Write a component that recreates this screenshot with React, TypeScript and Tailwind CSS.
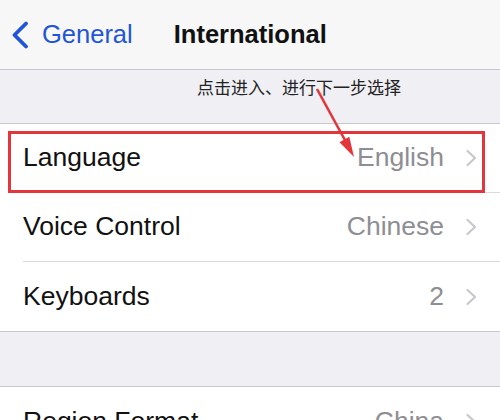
import React from 'react'

const rows = [
  { label: 'Language', value: 'English' },
  { label: 'Voice Control', value: 'Chinese' },
  { label: 'Keyboards', value: '2' },
]

function Chevron() {
  return (
    <svg width="12" height="18" viewBox="0 0 12 18" className="shrink-0">
      <path d="M2.5 2 L10 9 L2.5 16" fill="none" stroke="#c7c7cc" strokeWidth="2.2" strokeLinecap="round" strokeLinejoin="round" />
    </svg>
  )
}

function Row({ label, value, last }: { label: string; value: string; last?: boolean }) {
  return (
    <div className="pl-[23px] bg-white">
      <div className={`h-[69px] flex items-center pr-[23px] ${last ? '' : 'border-b border-[#d9d9de]'}`}>
        <span className="text-[26.5px] text-[#111111] flex-1">{label}</span>
        <span className="text-[26.5px] text-[#8e8e93] mr-[21px]">{value}</span>
        <Chevron />
      </div>
    </div>
  )
}

export default function App() {
  return (
    <div className="w-[500px] h-[420px] overflow-hidden relative bg-[#efeff4] font-['Liberation_Sans',Arial,sans-serif]">
      {/* Nav bar */}
      <div className="h-[70px] bg-[#f7f7f7] border-b border-[#c8c7cc] flex items-center">
        <div className="flex items-center pl-[11px] text-[#1f55d8]">
          <svg width="18" height="28" viewBox="0 0 18 28">
            <path d="M15 2.5 L3.5 14 L15 25.5" fill="none" stroke="#1f55d8" strokeWidth="3.8" strokeLinecap="round" strokeLinejoin="round" />
          </svg>
          <span className="text-[25.5px] ml-[13px]">General</span>
        </div>
        <span className="text-[25.5px] font-bold text-[#111111] ml-[41px]">International</span>
      </div>

      {/* Section gap with annotation */}
      <div className="h-[54px] border-b border-[#c8c7cc] pl-[197px] pt-[5px]">
        <span className="text-[17px] text-[#222222] font-['Noto_Sans_CJK_SC',sans-serif] leading-[24px]">
          点击进入、进行下一步选择
        </span>
      </div>

      {/* Rows */}
      {rows.map((r, i) => (
        <Row key={r.label} label={r.label} value={r.value} last={i === rows.length - 1} />
      ))}

      <div className="h-[56px] border-y border-[#c8c7cc]" />

      <Row label="Region Format" value="China" last />

      {/* Red highlight box */}
      <div className="absolute left-[8px] top-[131px] w-[477px] h-[62px] border-[3px] border-[#e2363c]" />

      {/* Arrow */}
      <svg className="absolute left-0 top-0" width="500" height="420" viewBox="0 0 500 420">
        <line x1="317" y1="89" x2="346" y2="142" stroke="#e2363c" strokeWidth="2.6" />
        <polygon points="354,157 349.3,136.8 339.5,142.2" fill="#e2363c" />
      </svg>
    </div>
  )
}
